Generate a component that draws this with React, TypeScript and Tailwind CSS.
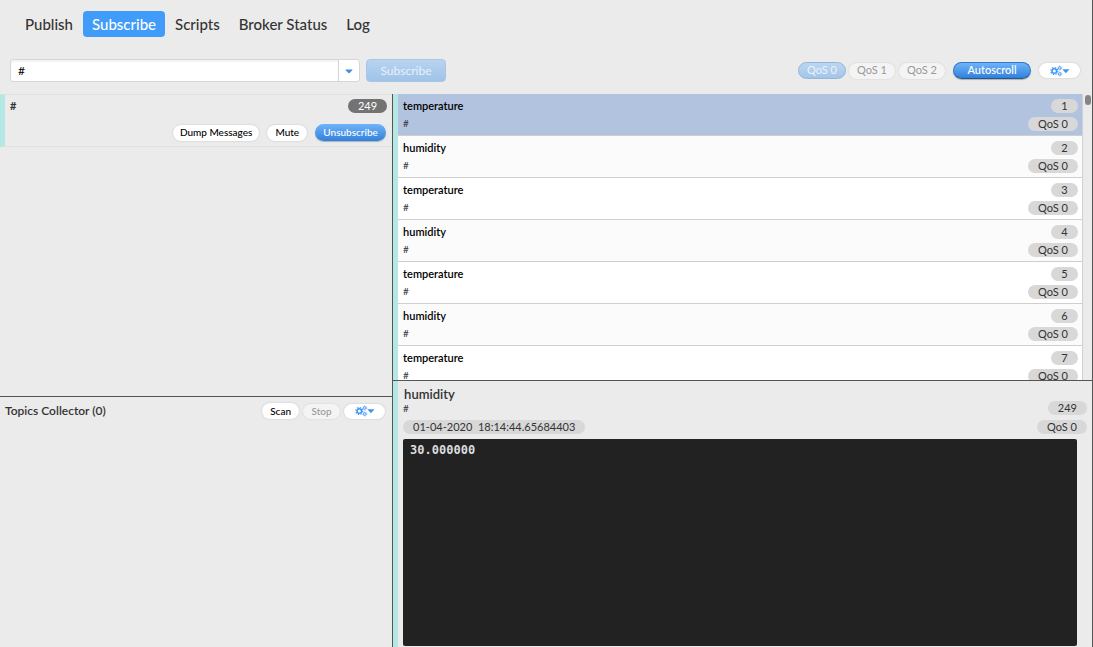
import { useState } from "react";
import type { ReactNode } from "react";
import { FaCaretDown } from "react-icons/fa";

const tabs = ["Publish", "Subscribe", "Scripts", "Broker Status", "Log"];

const messages = [1, 2, 3, 4, 5, 6, 7].map((id) => ({
  id,
  topic: id % 2 ? "temperature" : "humidity",
}));

const blue =
  "bg-linear-to-b from-[#6fb4f8] to-[#3080db] text-white shadow-[0_1px_1px_#00000040]";
const white = "bg-white shadow-[0_0_2px_#00000030]";

function Pill({
  children,
  className,
  disabled,
}: {
  children: ReactNode;
  className: string;
  disabled?: boolean;
}) {
  return (
    <button
      type="button"
      disabled={disabled}
      className={`flex shrink-0 items-center justify-center rounded-full whitespace-nowrap ${className}`}
    >
      {children}
    </button>
  );
}

function SettingsButton({ className }: { className: string }) {
  return (
    <button
      type="button"
      aria-label="Settings"
      className={`flex h-[15px] w-[41px] shrink-0 items-center justify-center rounded-full text-[#3d96f5] ${white} ${className}`}
    >
      <svg width="20" height="12" viewBox="0 0 20 12" fill="none" stroke="currentColor">
        <circle cx="4.3" cy="6" r="2.3" strokeWidth="1.5" />
        <circle cx="4.3" cy="6" r="3.5" strokeWidth="1.1" strokeDasharray="1.4 1.35" />
        <circle cx="9.8" cy="3" r="1.3" strokeWidth="0.9" />
        <circle cx="9.8" cy="3" r="2" strokeWidth="0.6" strokeDasharray="0.9 0.67" />
        <circle cx="9.8" cy="9" r="1.3" strokeWidth="0.9" />
        <circle cx="9.8" cy="9" r="2" strokeWidth="0.6" strokeDasharray="0.9 0.67" />
        <path d="M12.3 4.3h7.2L15.9 8.3z" fill="currentColor" stroke="none" />
      </svg>
    </button>
  );
}

function Badge({ children, dark }: { children: ReactNode; dark?: boolean }) {
  return (
    <span
      className={`flex h-[14px] min-w-[27px] items-center justify-center rounded-full px-[10px] text-[11px] whitespace-pre ${
        dark ? "bg-[#737373] text-white" : "bg-[#d8d8d8] text-[#333333]"
      }`}
    >
      {children}
    </span>
  );
}

export default function App() {
  const [tab, setTab] = useState("Subscribe");
  const [filter, setFilter] = useState("#");
  const [selected, setSelected] = useState(1);

  return (
    <div className="flex h-screen flex-col overflow-hidden border-r border-[#555555] bg-[#ebebeb] font-['Lato',sans-serif] text-[11px] text-[#333333]">
      <nav className="flex shrink-0 gap-[1px] px-4 pt-[11px]">
        {tabs.map((name) => (
          <button
            key={name}
            type="button"
            onClick={() => setTab(name)}
            className={`h-[26px] rounded-[4px] px-[9px] text-[15px] font-medium whitespace-nowrap ${
              tab === name ? "bg-[#419bf9] text-white" : "text-[#333333]"
            }`}
          >
            {name}
          </button>
        ))}
      </nav>

      <div className="flex shrink-0 items-center pt-[22px] pr-3 pb-3 pl-[10px]">
        <div className="flex h-[23px] w-[350px] rounded-[3px] border border-[#d6d6d6] bg-white">
          <input
            aria-label="Topic filter"
            value={filter}
            onChange={(event) => setFilter(event.target.value)}
            className="min-w-0 flex-1 rounded-l-[3px] px-[7px] text-[12px] text-black shadow-[inset_0_2px_2px_#0000000d] outline-none"
          />
          <button
            type="button"
            aria-label="Recent topics"
            className="flex w-[21px] items-center justify-center border-l border-[#d6d6d6] text-[#4a90d9]"
          >
            <FaCaretDown size={12} />
          </button>
        </div>
        <button
          type="button"
          disabled
          className="ml-[6px] h-[23px] w-[80px] rounded-[4px] border border-[#a9c6e6] bg-linear-to-b from-[#b7d4f1] to-[#a0c3e8] text-[12px] text-[#e6f0fa]"
        >
          Subscribe
        </button>
        <div className="ml-auto flex items-center">
          <Pill
            disabled
            className="h-[17px] w-[48px] border border-[#93b5d8] bg-linear-to-b from-[#bcd6f2] to-[#a3c5e9] text-[#ebf3fb]"
          >
            QoS 0
          </Pill>
          <Pill
            disabled
            className="ml-[3px] h-[16px] w-[46px] bg-[#f4f4f4] text-[#999999] shadow-[0_0_2px_#00000020]"
          >
            QoS 1
          </Pill>
          <Pill
            disabled
            className="ml-1 h-[16px] w-[46px] bg-[#f4f4f4] text-[#999999] shadow-[0_0_2px_#00000020]"
          >
            QoS 2
          </Pill>
          <Pill
            className={`ml-2 h-[17px] w-[78px] border border-[#2f76c4] border-b-[#22588f] font-medium ${blue}`}
          >
            Autoscroll
          </Pill>
          <SettingsButton className="ml-2" />
        </div>
      </div>

      <main className="flex min-h-0 flex-1">
        <div className="flex w-[36%] shrink-0 flex-col border-r border-[#555555]">
          <section className="h-[303px] shrink-0 border-b border-[#555555]">
            <div className="flex h-[53px] flex-col justify-between border-y border-l-[5px] border-y-[#e0e0e0] border-l-[#b5e7e5] pt-1 pr-[5px] pb-[5px] pl-[5px]">
              <div className="flex items-center justify-between">
                <span className="leading-[14px] font-bold">#</span>
                <Badge dark>249</Badge>
              </div>
              <div className="flex items-center justify-end gap-2 pr-[1px] text-[10px] font-medium">
                <Pill className={`h-[16px] px-[7px] text-black ${white}`}>Dump Messages</Pill>
                <Pill className={`h-[16px] px-2 text-black ${white}`}>Mute</Pill>
                <Pill className={`h-[17px] w-[71px] ${blue}`}>Unsubscribe</Pill>
              </div>
            </div>
          </section>
          <section className="flex items-center pt-[5px] pr-[7px] pl-[5px]">
            <h2 className="mr-auto text-[12px] font-semibold">Topics Collector (0)</h2>
            <Pill className={`h-[16px] w-[37px] text-[10px] font-medium text-black ${white}`}>
              Scan
            </Pill>
            <Pill
              disabled
              className="ml-1 h-[15px] w-[37px] bg-[#f4f4f4] text-[10px] font-medium text-[#999999] shadow-[0_0_2px_#00000020]"
            >
              Stop
            </Pill>
            <SettingsButton className="ml-1" />
          </section>
        </div>

        <div className="flex min-w-0 flex-1 flex-col">
          <section className="flex h-[287px] shrink-0 overflow-hidden border-b border-[#555555]">
            <ul className="min-w-0 flex-1 border-r border-[#d0d0d0]">
              {messages.map(({ id, topic }) => (
                <li key={id} className="border-l-[5px] border-[#b5e7e5]">
                  <button
                    type="button"
                    onClick={() => setSelected(id)}
                    className={`flex h-[42px] w-full justify-between border-b border-[#cfcfcf] pr-1 pl-[5px] text-left ${
                      selected === id
                        ? "bg-[#b2c3e0]"
                        : id % 2
                          ? "bg-white"
                          : "bg-[#fbfbfb]"
                    }`}
                  >
                    <span className="flex flex-col pt-1">
                      <span className="h-[18px] leading-4 font-semibold text-black">{topic}</span>
                      <span className="text-[10px] leading-[14px]">#</span>
                    </span>
                    <span className="flex flex-col items-end gap-1 pt-[5px]">
                      <Badge>{id}</Badge>
                      <Badge>QoS 0</Badge>
                    </span>
                  </button>
                </li>
              ))}
            </ul>
            <div className="flex w-[9px] shrink-0 justify-center pt-[1px]">
              <div className="h-[10px] w-[6px] rounded-full bg-[#858585]" />
            </div>
          </section>

          <section className="flex min-h-0 flex-1 flex-col border-l-[5px] border-[#b5e7e5] pb-[1px] pl-[5px]">
            <div className="flex shrink-0 justify-between pr-[5px]">
              <div className="flex flex-col items-start pt-[5px]">
                <h2 className="pl-[1px] text-[13px] leading-4 font-semibold">humidity</h2>
                <span className="mb-[5px] text-[10px] leading-[13px]">#</span>
                <Badge>01-04-2020  18:14:44.65684403</Badge>
              </div>
              <div className="flex flex-col items-end gap-[5px] pt-5">
                <Badge>249</Badge>
                <Badge>QoS 0</Badge>
              </div>
            </div>
            <textarea
              aria-label="Payload"
              readOnly
              value="30.000000"
              className="mt-[5px] mr-[15px] min-h-0 flex-1 resize-none rounded-[2px] bg-[#222222] px-[7px] py-1 font-['DejaVu_Sans_Mono',monospace] text-[12px] leading-[14px] font-bold text-[#dddddd] outline-none"
            />
          </section>
        </div>
      </main>
    </div>
  );
}
